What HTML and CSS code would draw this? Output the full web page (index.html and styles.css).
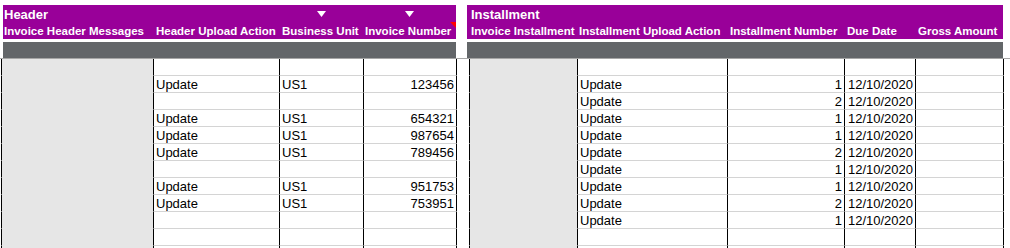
FILE: index.html
```html
<!DOCTYPE html>
<html lang="en">
<head>
<meta charset="utf-8">
<title>Invoice upload sheet</title>
<link rel="stylesheet" href="styles.css">
</head>
<body>
<div class="sheet">
  <div class="bands">
    <section class="band band-left">
      <div class="band-top">
        <div class="title">Header</div>
        <div></div>
        <div class="filter"><svg width="9" height="6" viewBox="0 0 9 6"><polygon points="0,0 9,0 4.5,6" fill="#fff"/></svg></div>
        <div class="filter"><svg width="9" height="6" viewBox="0 0 9 6"><polygon points="0,0 9,0 4.5,6" fill="#fff"/></svg></div>
        <div class="label first">Invoice Header Messages</div>
        <div class="label">Header Upload Action</div>
        <div class="label">Business Unit</div>
        <div class="label narrow comment">Invoice Number</div>
      </div>
      <div class="band-bar"></div>
    </section>
    <section class="band band-right">
      <div class="band-top">
        <div class="title first">Installment</div>
        <div></div><div></div><div></div><div></div>
        <div class="label first">Invoice Installment</div>
        <div class="label narrow">Installment Upload Action</div>
        <div class="label">Installment Number</div>
        <div class="label">Due Date</div>
        <div class="label">Gross Amount</div>
      </div>
      <div class="band-bar"></div>
    </section>
  </div>
  <div class="rule"></div>
  <div class="rows">
    <div class="row"><div class="cell shade"></div><div class="cell"></div><div class="cell"></div><div class="cell"></div><div class="cell gap"></div><div class="cell shade"></div><div class="cell"></div><div class="cell"></div><div class="cell"></div><div class="cell"></div><div class="cell end"></div></div>
    <div class="row"><div class="cell shade"></div><div class="cell">Update</div><div class="cell">US1</div><div class="cell num">123456</div><div class="cell gap"></div><div class="cell shade"></div><div class="cell">Update</div><div class="cell num">1</div><div class="cell num">12/10/2020</div><div class="cell"></div><div class="cell end"></div></div>
    <div class="row"><div class="cell shade"></div><div class="cell"></div><div class="cell"></div><div class="cell"></div><div class="cell gap"></div><div class="cell shade"></div><div class="cell">Update</div><div class="cell num">2</div><div class="cell num">12/10/2020</div><div class="cell"></div><div class="cell end"></div></div>
    <div class="row"><div class="cell shade"></div><div class="cell">Update</div><div class="cell">US1</div><div class="cell num">654321</div><div class="cell gap"></div><div class="cell shade"></div><div class="cell">Update</div><div class="cell num">1</div><div class="cell num">12/10/2020</div><div class="cell"></div><div class="cell end"></div></div>
    <div class="row"><div class="cell shade"></div><div class="cell">Update</div><div class="cell">US1</div><div class="cell num">987654</div><div class="cell gap"></div><div class="cell shade"></div><div class="cell">Update</div><div class="cell num">1</div><div class="cell num">12/10/2020</div><div class="cell"></div><div class="cell end"></div></div>
    <div class="row"><div class="cell shade"></div><div class="cell">Update</div><div class="cell">US1</div><div class="cell num">789456</div><div class="cell gap"></div><div class="cell shade"></div><div class="cell">Update</div><div class="cell num">2</div><div class="cell num">12/10/2020</div><div class="cell"></div><div class="cell end"></div></div>
    <div class="row"><div class="cell shade"></div><div class="cell"></div><div class="cell"></div><div class="cell"></div><div class="cell gap"></div><div class="cell shade"></div><div class="cell">Update</div><div class="cell num">1</div><div class="cell num">12/10/2020</div><div class="cell"></div><div class="cell end"></div></div>
    <div class="row"><div class="cell shade"></div><div class="cell">Update</div><div class="cell">US1</div><div class="cell num">951753</div><div class="cell gap"></div><div class="cell shade"></div><div class="cell">Update</div><div class="cell num">1</div><div class="cell num">12/10/2020</div><div class="cell"></div><div class="cell end"></div></div>
    <div class="row"><div class="cell shade"></div><div class="cell">Update</div><div class="cell">US1</div><div class="cell num">753951</div><div class="cell gap"></div><div class="cell shade"></div><div class="cell">Update</div><div class="cell num">2</div><div class="cell num">12/10/2020</div><div class="cell"></div><div class="cell end"></div></div>
    <div class="row"><div class="cell shade"></div><div class="cell"></div><div class="cell"></div><div class="cell"></div><div class="cell gap"></div><div class="cell shade"></div><div class="cell">Update</div><div class="cell num">1</div><div class="cell num">12/10/2020</div><div class="cell"></div><div class="cell end"></div></div>
    <div class="row"><div class="cell shade"></div><div class="cell"></div><div class="cell"></div><div class="cell"></div><div class="cell gap"></div><div class="cell shade"></div><div class="cell"></div><div class="cell"></div><div class="cell"></div><div class="cell"></div><div class="cell end"></div></div>
    <div class="row"><div class="cell shade"></div><div class="cell"></div><div class="cell"></div><div class="cell"></div><div class="cell gap"></div><div class="cell shade"></div><div class="cell"></div><div class="cell"></div><div class="cell"></div><div class="cell"></div><div class="cell end"></div></div>
  </div>
</div>
</body>
</html>
```
FILE: styles.css
```css
html, body {
  margin: 0;
  background: #fff;
}
body {
  font-family: "Liberation Sans", Arial, sans-serif;
  color: #000;
  overflow: hidden;
}
.sheet {
  padding-top: 5px;
}
.bands {
  display: flex;
  gap: 11px;
  padding-left: 3px;
}
.band {
  display: flex;
  flex-direction: column;
}
.band-left { width: 453px; }
.band-right { width: 536px; }
.band-top {
  background: #990099;
  color: #fff;
  display: grid;
  grid-template-rows: 17px 17px;
}
.band-left .band-top {
  grid-template-columns: 150px 126px 84px 93px;
}
.band-right .band-top {
  grid-template-columns: 110px 150px 117px 71px 88px;
}
.title {
  align-self: end;
  padding-left: 1px;
  font-size: 13px;
  font-weight: bold;
  line-height: 15px;
  white-space: nowrap;
}
.band-right .first {
  padding-left: 4px;
}
.filter {
  align-self: end;
  justify-self: center;
  height: 6px;
  margin-bottom: 5px;
}
.filter svg { display: block; }
.label {
  position: relative;
  align-self: end;
  height: 15px;
  box-sizing: border-box;
  padding: 0 0 1px 3px;
  font-size: 11.5px;
  font-weight: bold;
  line-height: 14px;
  white-space: nowrap;
}
.band-left .label.first { padding-left: 1px; }
.label.narrow { padding-left: 2px; }
.comment::after {
  content: "";
  position: absolute;
  top: -2px;
  right: 0;
  width: 0;
  height: 0;
  border-top: 6px solid #ff0000;
  border-left: 6px solid transparent;
}
.band-bar {
  margin-top: 3px;
  height: 16px;
  background: #636669;
}
.rule {
  height: 1px;
  background: #a6a6a6;
}
.rows {
  margin-left: 1px;
}
.row {
  display: grid;
  grid-template-columns: 152px 126px 84px 93px 13px 108px 150px 117px 71px 88px 7px;
}
.cell {
  box-sizing: border-box;
  height: 17px;
  border-left: 1px solid #000;
  border-bottom: 1px solid #d4d4d4;
  padding: 1px 2px 0;
  font-size: 13px;
  line-height: 16px;
  white-space: nowrap;
}
.cell.num { text-align: right; }
.cell.shade {
  background: #e6e6e6;
  border-bottom-color: #e6e6e6;
}
.cell.gap { border-bottom-color: #fff; }
.cell.end { border-bottom-color: transparent; }
```
